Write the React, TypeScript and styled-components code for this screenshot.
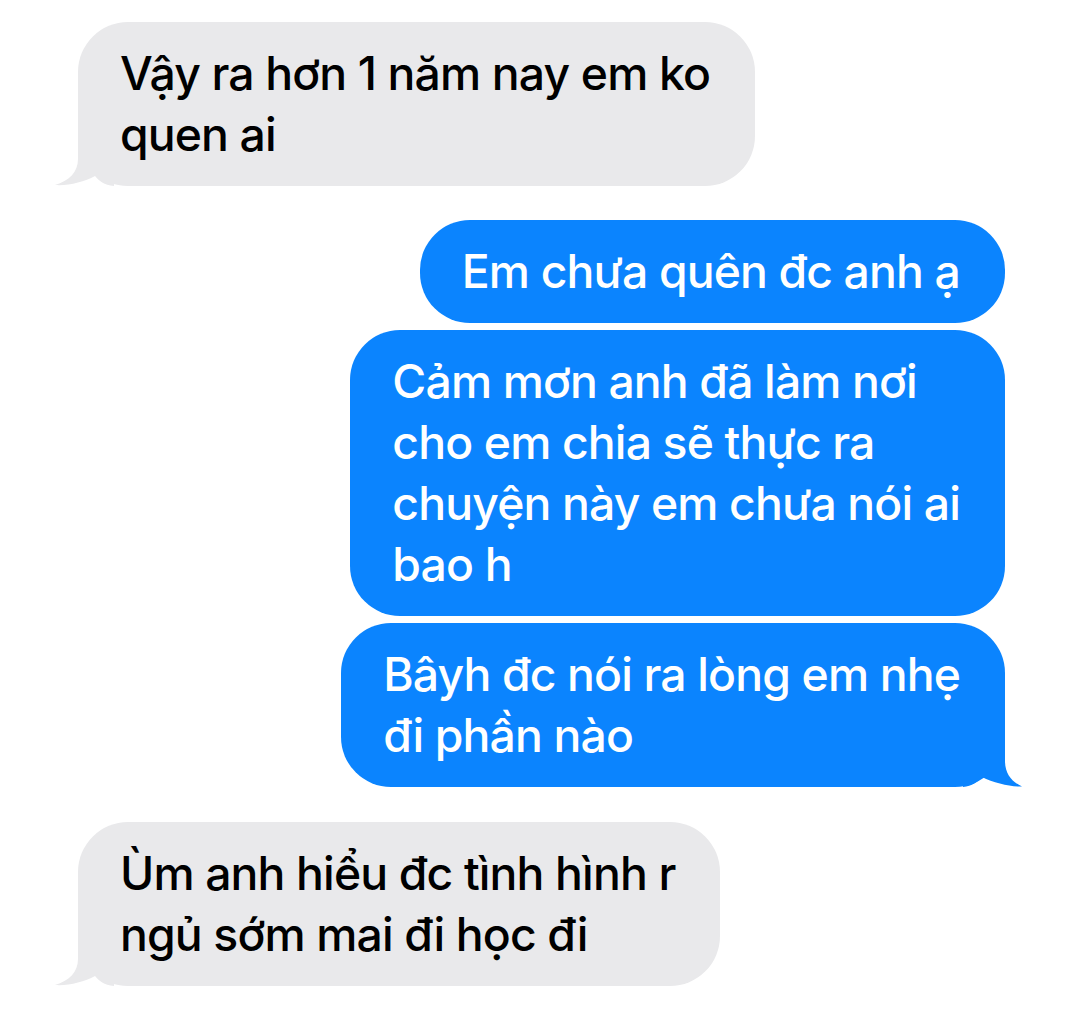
import React from "react";
import styled, { createGlobalStyle } from "styled-components";

const GlobalStyle = createGlobalStyle`
  html, body {
    margin: 0;
    padding: 0;
    background: #ffffff;
  }
  body {
    font-family: Inter, "Noto Sans", "Liberation Sans", sans-serif;
  }
`;

type Side = "left" | "right";

const messages: { side: Side; text: string; tail?: boolean; gap: number }[] = [
  { side: "left", text: "Vậy ra hơn 1 năm nay em ko\nquen ai", tail: true, gap: 0 },
  { side: "right", text: "Em chưa quên đc anh ạ", gap: 34 },
  {
    side: "right",
    text: "Cảm mơn anh đã làm nơi\ncho em chia sẽ thực ra\nchuyện này em chưa nói ai\nbao h",
    gap: 7,
  },
  { side: "right", text: "Bâyh đc nói ra lòng em nhẹ\nđi phần nào", tail: true, gap: 7 },
  { side: "left", text: "Ùm anh hiểu đc tình hình r\nngủ sớm mai đi học đi", tail: true, gap: 35 },
];

// tail shapes, 60x50 box sitting on the bubble's bottom corner
const tailPath: Record<Side, string> = {
  left: "M24 0 L24 23 C24 36 15 45 1 49 C14 50 30 46 41 40 C45 45 50 49 60 50 L60 0 Z",
  right: "M42 0 L42 24 C42 37 49 45 59 49.5 C48 50 31 46 19 40 C15 45 9 49 0 50 L0 0 Z",
};

export default function App() {
  return (
    <>
      <GlobalStyle />
      <Thread>
        {messages.map((m, i) => (
          <Row key={i} side={m.side} gap={m.gap}>
            <Bubble side={m.side}>
              {m.text}
              {m.tail && (
                <Tail side={m.side} viewBox="0 0 60 50" width="60" height="50">
                  <path d={tailPath[m.side]} />
                </Tail>
              )}
            </Bubble>
          </Row>
        ))}
      </Thread>
    </>
  );
}

const Thread = styled.div`
  display: flex;
  flex-direction: column;
  padding: 22px 75px 0 78px;
`;

const Row = styled.div<{ side: Side; gap: number }>`
  display: flex;
  justify-content: ${(p) => (p.side === "left" ? "flex-start" : "flex-end")};
  margin-top: ${(p) => p.gap}px;
`;

const Bubble = styled.div<{ side: Side }>`
  position: relative;
  width: fit-content;
  padding: 21px 45px 21px 42px;
  border-radius: 50px;
  background: ${(p) => (p.side === "left" ? "#e9e9eb" : "#0b84fe")};
  color: ${(p) => (p.side === "left" ? "#000000" : "#ffffff")};
  font-size: 46.3px;
  font-weight: 500;
  line-height: 61px;
  letter-spacing: -0.85px;
  white-space: pre-line;
`;

const Tail = styled.svg<{ side: Side }>`
  position: absolute;
  bottom: 0;
  ${(p) => (p.side === "left" ? "left: -24px;" : "right: -18px;")}
  fill: ${(p) => (p.side === "left" ? "#e9e9eb" : "#0b84fe")};
`;
